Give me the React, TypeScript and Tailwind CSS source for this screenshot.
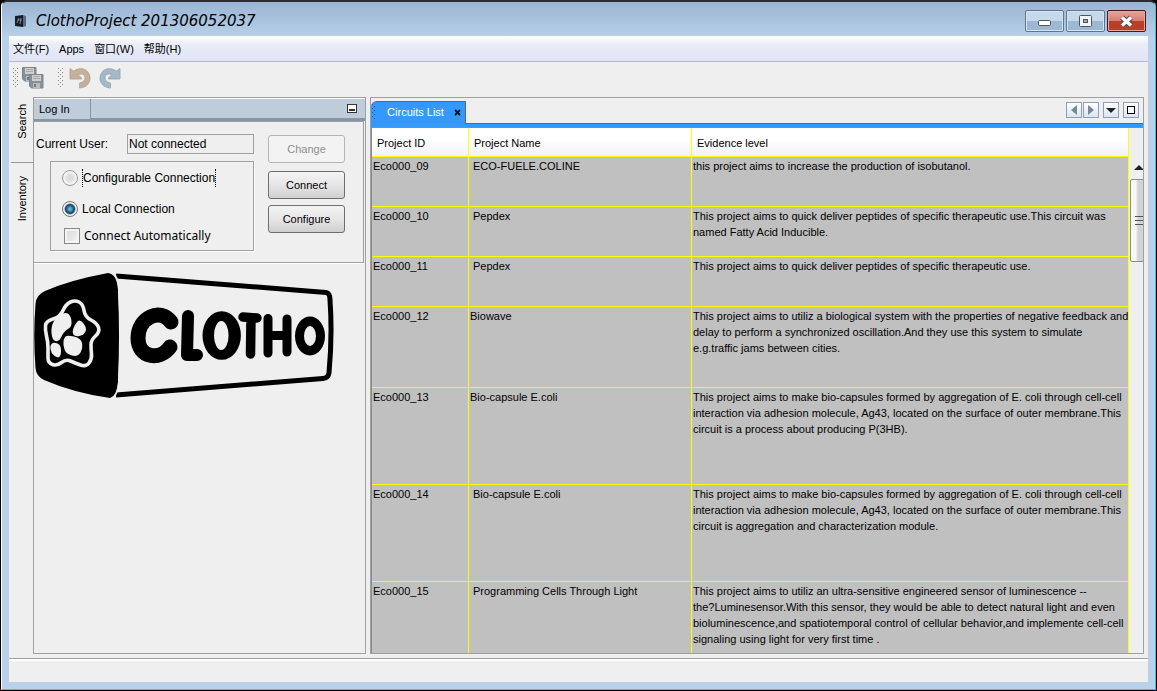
import React from "react";

const rows: { id: string; name: string; h: string; pad: string; text: string[] }[] = [
  { id: "Eco000_09", name: "ECO-FUELE.COLINE", h: "h-[50px]", pad: "pl-1", text: ["this project aims to increase the production of isobutanol."] },
  { id: "Eco000_10", name: "Pepdex", h: "h-[50px]", pad: "pl-1", text: ["This project aims to quick deliver peptides of specific therapeutic use.This circuit was", "named Fatty Acid Inducible."] },
  { id: "Eco000_11", name: "Pepdex", h: "h-[50px]", pad: "pl-1", text: ["This project aims to quick deliver peptides of specific therapeutic use."] },
  { id: "Eco000_12", name: "Biowave", h: "h-[81px]", pad: "pl-px", text: ["This project aims to utiliz a biological system with the properties of negative feedback and", "delay to perform a synchronized oscillation.And they use this system to simulate", "e.g.traffic jams between cities."] },
  { id: "Eco000_13", name: "Bio-capsule E.coli", h: "h-[97px]", pad: "pl-px", text: ["This project aims to make bio-capsules formed by aggregation of E. coli through cell-cell", "interaction via adhesion molecule, Ag43, located on the surface of outer membrane.This", "circuit is a process about producing P(3HB)."] },
  { id: "Eco000_14", name: "Bio-capsule E.coli", h: "h-[97px]", pad: "pl-1", text: ["This project aims to make bio-capsules formed by aggregation of E. coli through cell-cell", "interaction via adhesion molecule, Ag43, located on the surface of outer membrane.This", "circuit is aggregation and characterization module."] },
  { id: "Eco000_15", name: "Programming Cells Through Light", h: "h-[97px]", pad: "pl-1", text: ["This project aims to utiliz an ultra-sensitive engineered sensor of luminescence --", "the?Luminesensor.With this sensor, they would be able to detect natural light and even", "bioluminescence,and spatiotemporal control of cellular behavior,and implemente cell-cell", "signaling using light for very first time ."] },
];

// Closed curve that runs smoothly between the midpoints of the given corners.
function smooth(points: number[][]) {
  const mid = (a: number[], b: number[]) => `${(a[0] + b[0]) / 2} ${(a[1] + b[1]) / 2}`;
  const last = points[points.length - 1];
  return (
    `M${mid(last, points[0])}` +
    points.map((p, i) => `Q${p[0]} ${p[1]} ${mid(p, points[(i + 1) % points.length])}`).join("") +
    "Z"
  );
}

const membrane = [[75, 300], [83, 304], [85, 317], [97, 323], [100, 332], [91, 340], [91, 349], [92, 359], [86, 367], [75, 363], [66, 359], [57, 366], [48, 363], [48, 353], [48, 342], [45, 330], [46, 321], [60, 317], [66, 304]];
const cells = [
  [[66, 312], [71, 316], [72, 327], [64, 331], [59, 342], [52, 340], [51, 326], [57, 316]],
  [[80, 319], [87, 328], [84, 335], [75, 337], [72, 332], [75, 324]],
  [[54, 342], [61, 345], [61, 356], [57, 358], [51, 353], [50, 345]],
  [[67, 335], [81, 338], [83, 348], [78, 357], [66, 354], [63, 345], [64, 338]],
];

function Logo() {
  return (
    <svg viewBox="25 262 320 145" className="block h-[145px] w-[320px]" role="img" aria-label="Clotho">
      <path d="M108 273 Q70 280 45 291 Q36 295 35.500 304 Q33 335 35.500 368 Q36 376 44 380 Q74 393 110 398 Q117 396 118 382 Q120 335 118 290 Q117 274 108 273Z" fill="#000" />
      <path d="M116 276 L326 292.500 Q330 293 330 300 Q332.500 335 329 373 Q328 378 323 378.500 L116 395" fill="none" stroke="#000" strokeWidth="5" />
      <path d="M112 273 Q118 275 119 290 Q121 335 119 381 Q118 394 113 398" fill="none" stroke="#efefef" strokeWidth="1.500" />
      <path d={smooth(membrane)} fill="none" stroke="#efefef" strokeWidth="3.600" />
      {cells.map((c, i) => <path key={i} d={smooth(c)} fill="#efefef" />)}
      <g fill="none" stroke="#000" strokeLinecap="round" strokeLinejoin="round">
        <path d="M171 322 C160 307 138 318 138 338 C138 358 160 361 170 347" strokeWidth="15" />
        <path d="M188 316 L187 355 L197 355" strokeWidth="12" />
        <path d="M243 317 L257 318 M251 318 L250.500 354" strokeWidth="9.500" />
        <path d="M268 318.500 L268 353 M287 319 L287 352 M269 335.500 L286 335.500" strokeWidth="9" />
      </g>
      <path fillRule="evenodd" d="M202.500 335.500a19.200 24.200 0 1 0 38.400 0a19.200 24.200 0 1 0-38.400 0Z M214 335.500a7.300 14.500 0 1 1 14.600 0a7.300 14.500 0 1 1-14.600 0Z M295 336a15 19.500 0 1 0 30 0a15 19.500 0 1 0-30 0Z M304 336a6 10 0 1 1 12 0a6 10 0 1 1-12 0Z" />
    </svg>
  );
}

function Grip() {
  return (
    <svg className="h-5 w-[6px]" viewBox="0 0 6 20" fill="#888" aria-hidden="true">
      {[0, 4, 8, 12, 16].map((y) => (
        <path key={y} d={`M0 ${y}h1v1h-1zM4 ${y}h1v1h-1zM2 ${y + 2}h1v1h-1z`} />
      ))}
    </svg>
  );
}

function TurnArrow({ fill, edge }: { fill: string; edge: string }) {
  return (
    <svg className="h-[22px] w-[22px]" viewBox="0 0 22 22">
      <path d="M1 1.500L4.500 4Q12-.5 17.500 3.500Q22 7.500 21 13Q19 20.500 10.500 21V16Q16 15 16 10.500Q15.500 5.500 9 7.500L12.500 11V12H1Z" fill={fill} stroke={edge} strokeWidth=".8" />
    </svg>
  );
}

const caption =
  "flex h-[22px] w-[39px] items-center justify-center rounded-[2px] border border-[#5f7590] bg-linear-to-b from-[#c6d9ec] from-50% to-[#9db8d2] to-50% shadow-[inset_0_0_0_1px_#d5e4f3]";
const push =
  "h-7 w-[77px] rounded-[3px] border border-[#6e6e6e] bg-linear-to-b from-[#f4f4f4] via-[#e6e6e6] via-50% to-[#cfcfcf] text-[11px] text-black";
const small = "flex h-4 w-4 items-center justify-center border border-[#8c9fb4] bg-linear-to-b from-white to-[#dbe5f0]";

export default function App() {
  return (
    <div className="bg-black pr-px pb-px pl-px font-['Liberation_Sans','Noto_Sans_CJK_SC',sans-serif] text-[11px] text-black">
      <div className="flex h-[calc(100vh-1px)] min-h-[400px] flex-col overflow-hidden rounded-t-md border-t-2 border-r border-b border-l border-t-[#2c2c34] border-r-[#30c8e0] border-b-[#30c8e0] border-l-white bg-linear-to-b from-[#9ab5d3] to-[#b9d1ea] to-[36px] px-[7px] pb-[7px]">
        <header className="flex h-[34px] shrink-0 items-center px-1 pt-1">
          <svg className="ml-px h-[14px] w-3" viewBox="0 0 12 14" aria-hidden="true">
            <path d="M1 2L9 1v12L1 12z" fill="#151c28" />
            <path d="M9 1l3 1v10l-3 1z" fill="#5e6b7c" />
            <path d="M3 6h5M3 9l2-5M6 10l1-6" stroke="#74869c" fill="none" />
          </svg>
          <h1 className="ml-[10px] flex-1 font-['DejaVu_Sans'] text-[15px] leading-5 italic">ClothoProject 201306052037</h1>
          <div className="-mr-1 flex gap-[2px] pr-[2px]">
            <button aria-label="Minimize" className={caption}>
              <svg className="mt-1 h-[7px] w-[13px]" viewBox="0 0 13 7"><rect x=".5" y=".5" width="12" height="5" rx="1" fill="#fff" stroke="#4b5563" /></svg>
            </button>
            <button aria-label="Maximize" className={caption}>
              <svg className="h-[13px] w-[13px]" viewBox="0 0 13 13"><rect x=".5" y=".5" width="12" height="11" rx="1" fill="#f4f4f4" stroke="#4b5563" /><rect x="4.500" y="4.500" width="4" height="3" fill="#91aac6" stroke="#4b5563" /></svg>
            </button>
            <button aria-label="Close" className="flex h-[22px] w-[39px] items-center justify-center rounded-[2px] border border-[#4e1420] bg-linear-to-b from-[#e2a599] from-0% via-[#d4806f] via-50% to-[#b8402a] to-50% shadow-[inset_0_0_0_1px_#e5a89c]">
              <svg className="h-[13px] w-[15px]" viewBox="0 0 15 13"><path d="M3 2.500l9 8M12 2.500l-9 8" stroke="#5c4044" strokeWidth="5.500" /><path d="M3 2.500l9 8M12 2.500l-9 8" stroke="#fff" strokeWidth="3.500" /></svg>
            </button>
          </div>
        </header>

        <div className="flex min-h-0 flex-1 flex-col bg-[#efefef]">
          <nav className="flex h-[26px] shrink-0 items-center gap-[10px] border-b border-[#b4b7d2] bg-linear-to-b from-white via-[#e9ecf6] via-35% to-[#e0e4f4] px-1 pt-px">
            <button>文件(F)</button>
            <button>Apps</button>
            <button>窗口(W)</button>
            <button>帮助(H)</button>
          </nav>

          <div className="flex h-[35px] shrink-0 items-center px-1 pb-1">
            <Grip />
            <button aria-label="Save all" className="ml-[3px]">
              <svg className="h-[22px] w-[22px]" viewBox="0 0 22 22">
                {["translate(0 0)", "translate(7 7)"].map((t) => (
                  <g key={t} transform={t}>
                    <path d="M.5 .5h13.500v13.500H2.500l-2-2z" fill="#87919a" stroke="#7b848b" />
                    <rect x="3" y="1" width="9" height="6" fill="#cfcfcf" />
                    <path d="M4 2.500h7M4 4.500h7" stroke="#aaa" />
                    <rect x="4" y="9" width="7" height="5" fill="#b8bcbf" />
                    <rect x="5" y="10" width="2" height="3" fill="#707b83" />
                  </g>
                ))}
              </svg>
            </button>
            <span className="ml-[14px] flex"><Grip /></span>
            <button aria-label="Undo" className="ml-[5px]"><TurnArrow fill="#c5b09b" edge="#b39f8b" /></button>
            <button aria-label="Redo" className="ml-2 -scale-x-100"><TurnArrow fill="#a6b8c5" edge="#8fa5b4" /></button>
          </div>

          <main className="flex min-h-0 flex-1 pr-1 pb-1">
            <aside className="flex w-6 shrink-0 flex-col items-center pl-[2px]">
              <button className="h-[66px] w-full border-b border-[#999] pb-4 [writing-mode:sideways-lr]">Search</button>
              <button className="mt-[13px] [writing-mode:sideways-lr]">Inventory</button>
            </aside>

            <section className="w-[333px] shrink-0 border border-[#a0a0a0]">
              <div className="flex h-[23px] border-t border-b-2 border-t-white border-b-[#8796a4] bg-[#bfcddb]">
                <h2 className="w-[57px] border-r border-[#8796a4] pl-[5px] leading-[21px]">Log In</h2>
                <div className="flex flex-1 items-center justify-end border-b border-[#8796a4] pr-2">
                  <button aria-label="Minimize panel" className="flex h-[9px] w-[10px] items-end justify-center border border-[#333] bg-white pb-px"><span className="h-[2px] w-[6px] bg-[#333]" /></button>
                </div>
              </div>
              <form className="mr-px flex h-[142px] border border-l-0 border-[#a0a0a0] pt-3 pl-[2px] text-[12px] shadow-[0_1px_0_white]" onSubmit={(e) => e.preventDefault()}>
                <div className="w-[218px]">
                  <div className="flex items-center justify-between">
                    <label htmlFor="user">Current User:</label>
                    <input id="user" readOnly defaultValue="Not connected" className="h-5 w-[127px] border border-[#a0a0a0] pl-px text-[12px] outline-none" />
                  </div>
                  <fieldset className="mt-[7px] ml-[14px] h-[90px] border border-[#a0a0a0] pl-[11px] shadow-[1px_1px_0_white]">
                    <label className="mt-[7px] flex h-[18px] items-center gap-1">
                      <input type="radio" name="conn" className="h-4 w-4 appearance-none rounded-full border border-[#999] bg-radial from-[#d8d8dc] to-[#f3f3f3] shadow-[inset_0_0_0_2px_#f4f4f4]" />
                      <span className="border-x border-dotted border-black">Configurable Connection</span>
                    </label>
                    <label className="mt-[13px] flex h-[18px] items-center gap-1">
                      <input type="radio" name="conn" defaultChecked className="h-4 w-4 appearance-none rounded-full border border-[#777] bg-radial from-[#5cb5de] from-10% via-[#12415f] via-45% to-[#f4f4f4] to-60%" />
                      Local Connection
                    </label>
                    <label className="mt-[9px] ml-[2px] flex h-[18px] items-center gap-1">
                      <input type="checkbox" className="h-4 w-4 appearance-none border border-[#888] bg-linear-to-br from-[#d5d5da] to-[#f7f7f7] shadow-[inset_0_0_0_2px_#f4f4f4]" />
                      <span className="font-['Noto_Sans']">Connect Automatically</span>
                    </label>
                  </fieldset>
                </div>
                <div className="ml-[14px] flex flex-col gap-[6px] pt-px">
                  <button disabled className="mb-[2px] h-7 w-[77px] rounded-[3px] border border-[#b4b4b4] bg-[#f3f3f3] text-[11px] text-[#8e8e8e]">Change</button>
                  <button className={push}>Connect</button>
                  <button className={push}>Configure</button>
                </div>
              </form>
              <div className="-ml-[9px] -mt-px"><Logo /></div>
            </section>

            <section className="ml-1 flex min-w-0 flex-1 flex-col border border-[#a0a0a0]">
              <div className="flex h-[26px] shrink-0 items-end">
                <div className="flex h-[23px] w-[95px] items-center justify-between rounded-tl-md border-t border-r border-[#666] bg-[#3399ff] pr-1 pb-[2px] pl-px text-white">
                  <svg className="h-4 w-[5px]" viewBox="0 0 5 16" fill="#235a95" aria-hidden="true">
                    {[0, 4, 8, 12].map((y) => <path key={y} d={`M0 ${y}h1v1h-1zM2 ${y + 2}h1v1h-1z`} />)}
                  </svg>
                  <h2>Circuits List</h2>
                  <button aria-label="Close tab"><svg className="h-[7px] w-[7px]" viewBox="0 0 7 7"><path d="M1 1l5 5M6 1L1 6" stroke="#111" strokeWidth="1.800" /></svg></button>
                </div>
                <div className="flex h-[26px] flex-1 items-center justify-end border-b border-[#666] pr-1 pb-px">
                  <button aria-label="Previous" className={small}><svg className="h-[10px] w-[6px]" viewBox="0 0 6 10"><path d="M6 0v10L0 5z" fill="#76889a" /></svg></button>
                  <button aria-label="Next" className={`${small} ml-px`}><svg className="h-[10px] w-[6px]" viewBox="0 0 6 10"><path d="M0 0v10l6-5z" fill="#76889a" /></svg></button>
                  <button aria-label="Show list" className={`${small} ml-1`}><svg className="h-[5px] w-[10px]" viewBox="0 0 10 5"><path d="M0 0h10L5 5z" fill="#222" /></svg></button>
                  <button aria-label="Maximize panel" className={`${small} ml-1`}><span className="h-2 w-2 border border-black bg-white" /></button>
                </div>
              </div>
              <div className="h-[4px] shrink-0 border-b border-[#7a8fa5] bg-[#3399ff]" />
              <div className="flex min-h-0 flex-1">
                <div className="min-w-0 flex-1 overflow-hidden border-l border-[#8a8a8a] bg-[#c0c0c0]">
                  <table className="w-full table-fixed border-separate border-spacing-0 text-left">
                    <colgroup><col className="w-[97px]" /><col className="w-[223px]" /><col /></colgroup>
                    <thead>
                      <tr className="h-[29px] bg-linear-to-b from-white from-40% to-[#eff1f4]">
                        {["Project ID", "Project Name", "Evidence level"].map((t) => (
                          <th key={t} className="border-r border-b border-[#ffff00] pt-[2px] pl-[5px] font-normal">{t}</th>
                        ))}
                      </tr>
                    </thead>
                    <tbody>
                      {rows.map((r) => (
                        <tr key={r.id} className={`${r.h} align-top leading-4`}>
                          <td className="border-r border-b border-[#ffff00] pt-px pl-px">{r.id}</td>
                          <td className={`border-r border-b border-[#ffff00] pt-px ${r.pad}`}>{r.name}</td>
                          <td className="border-r border-b border-[#ffff00] pt-px pl-px whitespace-nowrap">
                            {r.text.map((t) => <p key={t}>{t}</p>)}
                          </td>
                        </tr>
                      ))}
                    </tbody>
                  </table>
                </div>
                <div className="w-[14px] shrink-0 overflow-hidden pt-[37px] pl-px">
                  <svg className="mb-[9px] ml-1 h-[5px] w-[10px]" viewBox="0 0 10 5"><path d="M0 5h10L5 0z" fill="#222" /></svg>
                  <div className="flex h-[83px] w-4 items-center rounded-[2px] border border-[#8c8c8c] bg-linear-to-r from-[#f7f7f7] from-35% to-[#d3d3d3] to-50% pl-1">
                    <svg className="h-[11px] w-2" viewBox="0 0 8 11"><path d="M0 1.500h8M0 5.500h8M0 9.500h8" stroke="#555" /></svg>
                  </div>
                </div>
              </div>
            </section>
          </main>
          <footer className="h-6 shrink-0 border-t border-[#a0a0a0] shadow-[inset_0_2px_0_white]" />
        </div>
      </div>
    </div>
  );
}
